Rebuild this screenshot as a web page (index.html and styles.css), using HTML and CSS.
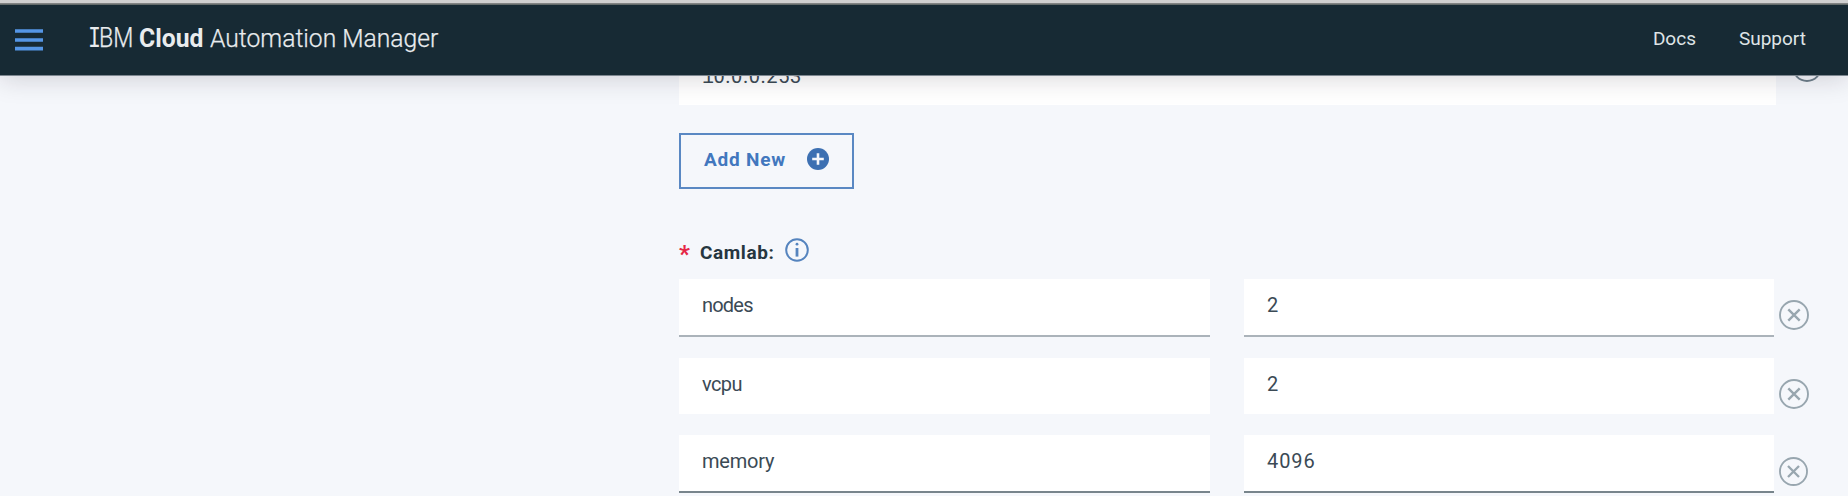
FILE: index.html
```html
<!DOCTYPE html>
<html lang="en">
<head>
<meta charset="utf-8">
<title>IBM Cloud Automation Manager</title>
<link rel="stylesheet" href="styles.css">
</head>
<body>
<svg class="defs" width="0" height="0" aria-hidden="true">
  <symbol id="remove" viewBox="0 0 30 30"><circle cx="15" cy="15" r="14" /><path d="M9.3 9.3l11.4 11.4M20.7 9.3L9.3 20.7" stroke-width="2.4" /></symbol>
</svg>
<header class="header">
  <svg class="menu" viewBox="0 0 28 22"><path d="M0 2h28M0 11h28M0 19.6h28" /></svg>
  <h1 class="title"><span class="slab">I</span><span class="bm">BM</span><b class="cloud">Cloud</b><span class="product">Automation Manager</span></h1>
  <nav class="nav"><a class="docs">Docs</a><a class="support">Support</a></nav>
</header>
<main class="content">
  <div class="row address">
    <div class="field wide"><span class="ip"><span class="slab one">1</span>0.0.0.253</span></div>
    <svg class="remove dark"><use href="#remove" /></svg>
  </div>
  <button class="add"><span>Add New</span>
    <svg viewBox="0 0 22 22"><circle cx="11" cy="11" r="11" /><path d="M11 5.2v11.6M5.2 11h11.6" /></svg>
  </button>
  <div class="label"><span class="star">*</span><span class="name">Camlab:</span>
    <svg class="info" viewBox="0 0 24 24"><circle cx="12" cy="12" r="10.8" /><path d="M12 10v8.6" class="stem" /><circle cx="12" cy="6.2" r="1.4" class="dot" /></svg>
  </div>
  <div class="rows">
    <div class="row"><div class="field line-light"><span class="nodes">nodes</span></div><div class="field line-light"><span>2</span></div><svg class="remove"><use href="#remove" /></svg></div>
    <div class="row second"><div class="field"><span class="vcpu">vcpu</span></div><div class="field"><span>2</span></div><svg class="remove"><use href="#remove" /></svg></div>
    <div class="row third"><div class="field line-dark"><span class="memory">memory</span></div><div class="field line-dark"><span class="amount">4096</span></div><svg class="remove small"><use href="#remove" /></svg></div>
  </div>
</main>
</body>
</html>
```
FILE: styles.css
```css
* { box-sizing: border-box; }
body { margin: 0; height: 496px; overflow: hidden; background: #f5f7fb; color: #3b4a55; font: 20px/24px Roboto, sans-serif; }
.defs { position: absolute; }
.header { position: relative; z-index: 1; height: 76px; display: flex; align-items: flex-start; background: #172a34; border-top: 3px solid #d0d0d0; box-shadow: 0 3px 24px rgba(30, 20, 35, .17); border-bottom: 1px solid #7d8790; }
.header::before { content: ""; position: absolute; inset: 0 0 auto; height: 2px; background: linear-gradient(#8f8f8f, #56605f); }
.menu { width: 28px; height: 22px; margin: 26px 0 0 15px; fill: none; stroke: #5596e6; stroke-width: 3.7; }
.title { display: flex; align-items: baseline; margin: 19px 0 0 47px; font-size: 27px; line-height: 32px; font-weight: 300; color: #e9ecee; white-space: pre; }
.slab { font-family: "Liberation Mono", monospace; }
.title .slab { width: 17px; margin: 0 -6px 0 -2px; font-size: 30px; transform: scaleX(.72); transform-origin: left; }
.bm { width: 43px; transform: scaleX(.86); transform-origin: left; -webkit-text-stroke: .25px #e9ecee; }
.cloud { width: 71px; margin-left: -3px; font-size: 26px; font-weight: 700; transform: scaleX(.95); transform-origin: left; }
.product { font-size: 26.5px; transform: scaleX(.93); transform-origin: left; -webkit-text-stroke: .25px #e9ecee; }
.nav { margin: 24px 42px 0 auto; display: flex; gap: 43px; color: #dfe4e6; font-size: 19px; }
.content { padding-left: 679px; }
.row { display: flex; align-items: flex-start; height: 58px; }
.field { width: 531px; height: 56px; padding: 15px 0 0 23px; background: #fff; }
.field + .field { width: 530px; margin-left: 34px; }
.line-light { height: 58px; border-bottom: 2px solid #abb3ba; }
.line-dark { height: 58px; border-bottom: 2px solid #78858c; }
.remove { width: 30px; height: 30px; margin: 21px 0 0 5px; fill: none; stroke: #98a6af; stroke-width: 1.9; }
.small { width: 29px; height: 29px; margin-top: 22px; }
.address { height: 56px; margin-top: -27px; }
.wide { width: 1097px; }
.dark { margin: 3px 0 0 16px; stroke: #6e7f8b; }
.one { display: inline-block; width: 11.5px; }
.ip { letter-spacing: .55px; }
.nodes { letter-spacing: -.8px; }
.vcpu { letter-spacing: -.6px; }
.memory { letter-spacing: -.2px; }
.amount { letter-spacing: .9px; }
.add { display: flex; width: 175px; height: 56px; margin-top: 28px; padding: 13px 0 0 23px; border: 2px solid #5a88c3; background: none; color: #4277be; font: 700 19px/24px Roboto, sans-serif; letter-spacing: .8px; }
.add span { width: 91px; text-align: left; }
.add svg { width: 22px; height: 22px; margin: 0 0 0 12px; fill: #3d70b2; }
.add path { stroke: #f5f7fb; stroke-width: 2.6; }
.label { display: flex; height: 41px; margin-top: 48px; color: #263640; font-weight: 700; }
.star { width: 21px; padding-top: 3px; color: #e52746; font-size: 24px; line-height: 28px; }
.name { width: 85px; padding-top: 4px; font-size: 19px; letter-spacing: .6px; }
.info { width: 24px; height: 24px; margin-top: 1px; fill: none; stroke: #5584be; stroke-width: 2; }
.info .stem { stroke-width: 2.8; }
.info .dot { fill: #5584be; stroke: none; }
.rows { padding-top: 1px; }
.second { margin-top: 21px; }
.third { margin-top: 19px; }
.rows .field { padding-top: 14px; }
```
